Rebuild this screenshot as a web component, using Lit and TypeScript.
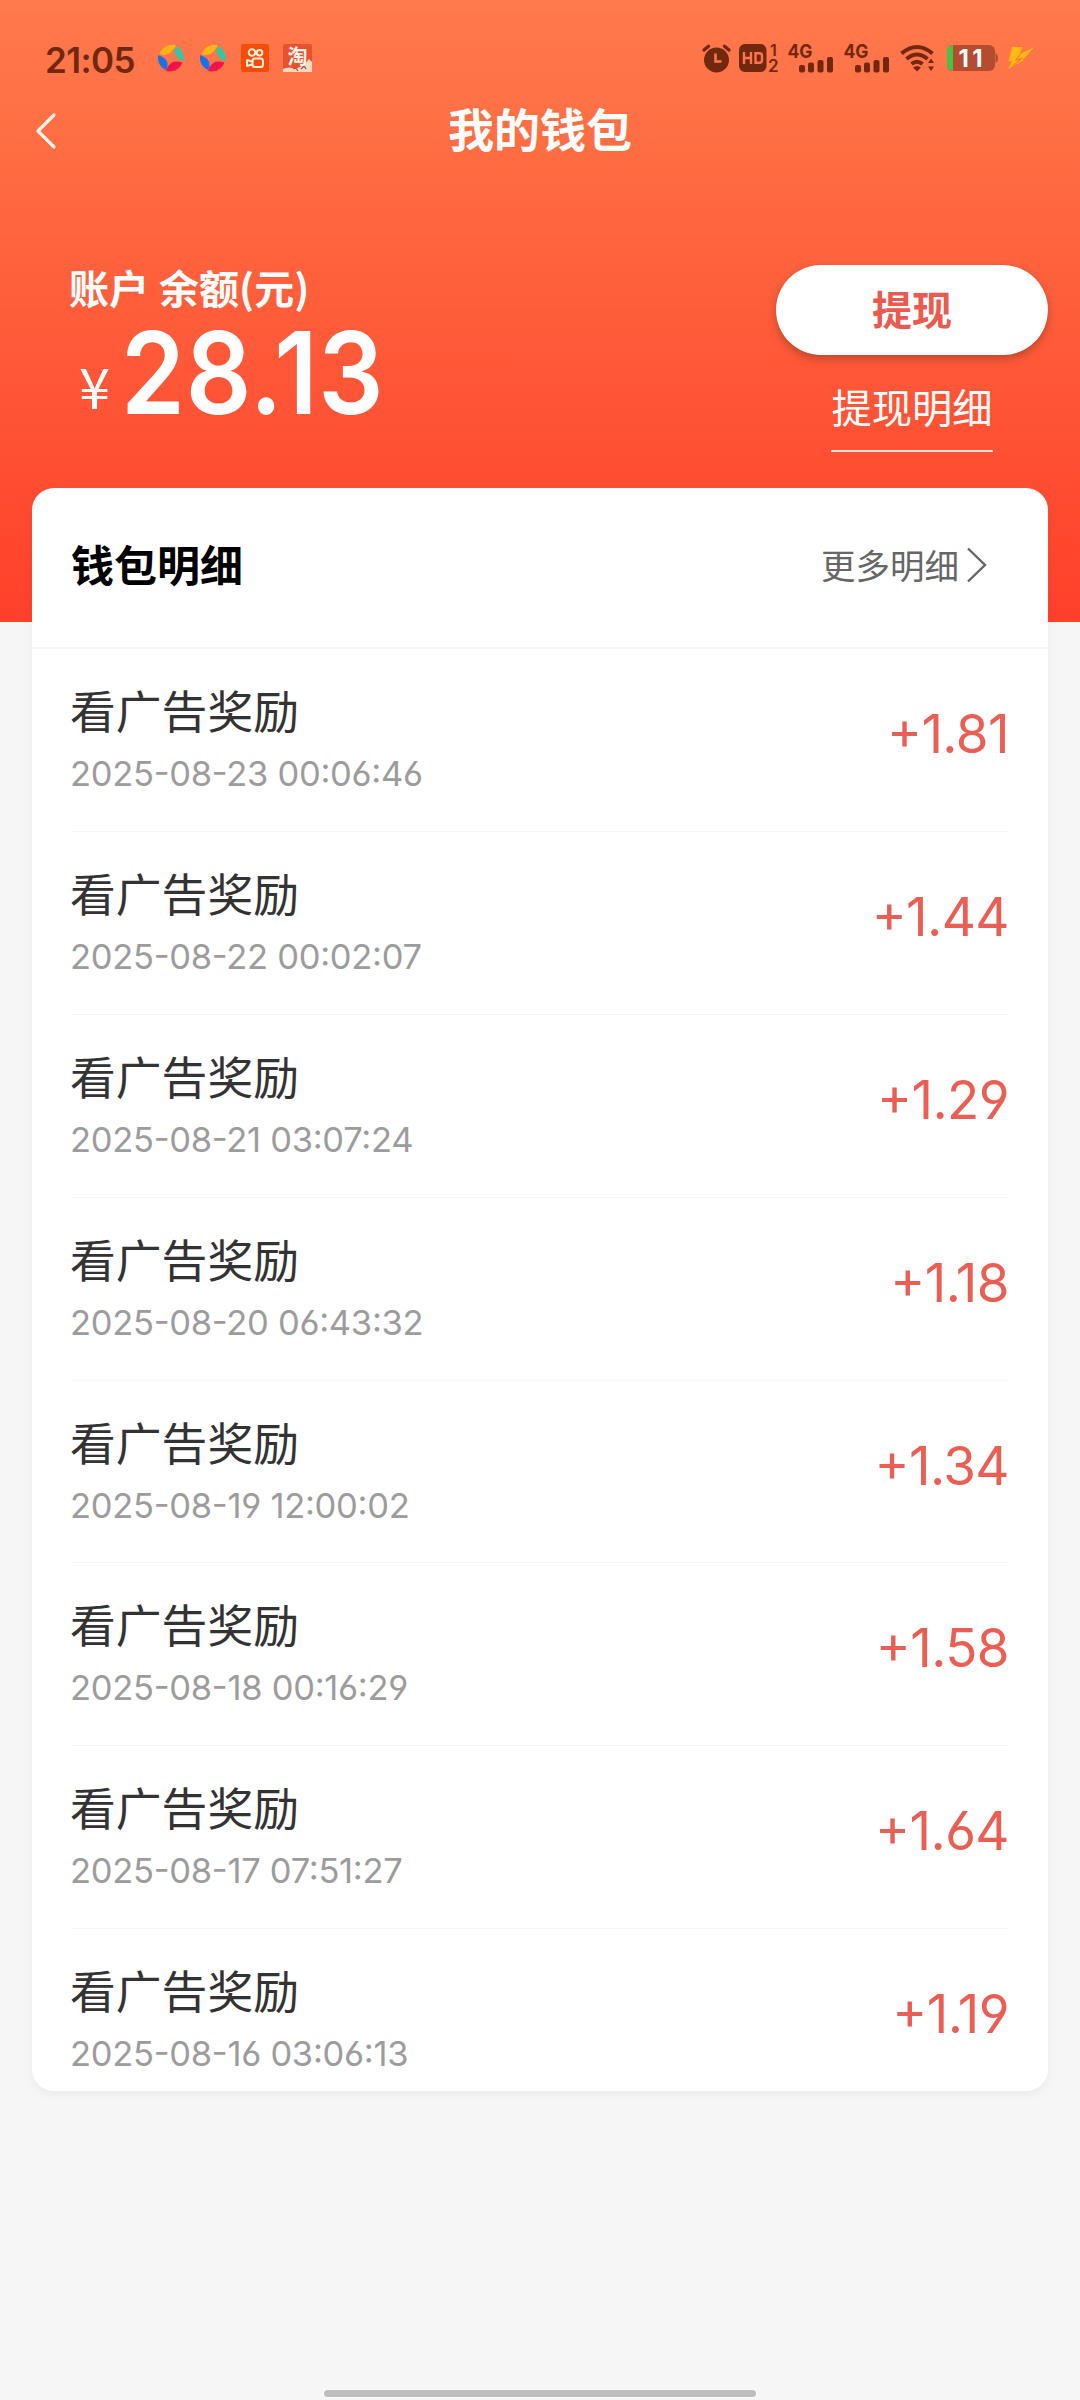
import { LitElement, html, css } from "lit";
import { customElement } from "lit/decorators.js";

interface Reward {
  title: string;
  time: string;
  amount: string;
}

const REWARDS: Reward[] = [
  { title: "看广告奖励", time: "2025-08-23 00:06:46", amount: "+1.81" },
  { title: "看广告奖励", time: "2025-08-22 00:02:07", amount: "+1.44" },
  { title: "看广告奖励", time: "2025-08-21 03:07:24", amount: "+1.29" },
  { title: "看广告奖励", time: "2025-08-20 06:43:32", amount: "+1.18" },
  { title: "看广告奖励", time: "2025-08-19 12:00:02", amount: "+1.34" },
  { title: "看广告奖励", time: "2025-08-18 00:16:29", amount: "+1.58" },
  { title: "看广告奖励", time: "2025-08-17 07:51:27", amount: "+1.64" },
  { title: "看广告奖励", time: "2025-08-16 03:06:13", amount: "+1.19" },
];

@customElement("status-bar")
class StatusBar extends LitElement {
  static styles = css`
    :host {
      display: flex;
      justify-content: space-between;
      align-items: flex-start;
      height: 76px;
      padding: 40px 44px 0 45px;
      box-sizing: border-box;
      color: #70280f;
      font-family: "Inter", "Noto Sans CJK SC", sans-serif;
    }
    .left,
    .right {
      display: flex;
      align-items: center;
      height: 36px;
    }
    .time {
      width: 112px;
      padding-top: 3px;
      font-size: 35px;
      line-height: 36px;
      font-weight: 600;
      letter-spacing: -0.6px;
      white-space: nowrap;
    }
    svg {
      display: block;
      flex: none;
      overflow: visible;
    }
    .swirl,
    .square {
      margin-right: 14px;
    }
    .alarm {
      margin-right: 8px;
    }
    .hd {
      margin-right: 10px;
    }
    .signal {
      margin-right: 11px;
    }
    .wifi {
      margin-right: 12px;
    }
    .battery {
      margin-right: 8px;
    }
  `;

  private swirl() {
    return html`<svg class="swirl" width="28" height="28" viewBox="0 0 28 28">
      <path d="M2.500 10C5 3 12 0 19 1c-2 4-5 8-9 9.500-2 .6-5 .6-7.500-.5z" fill="#fbb614" />
      <path d="M19 2C25 5 28 11 26.500 17.500 21.500 15.500 17.800 12 17.500 8c-.1-2 .3-4 1.500-6z" fill="#3cc3a0" />
      <path d="M25.500 18.500C22 26 16 28.500 9 27c1.500-5 5-9 9-9.500 2-.3 5 0 7.500 1z" fill="#f0144b" />
      <path d="M1.300 11C6 12.500 9.800 15.500 10.500 19.500c.2 2-.2 4.500-1.500 6.500C2.500 23 0 17 1.300 11z" fill="#1b72e8" />
    </svg>`;
  }

  private signal() {
    return html`<svg class="signal" width="45" height="30" viewBox="0 0 45 30">
      <text x="-0.500" y="15" font-size="19" font-weight="700" textLength="25" lengthAdjust="spacingAndGlyphs" fill="#70280f">4G</text>
      <g fill="#70280f">
        <rect x="11" y="22" width="6" height="7.500" rx="2" />
        <rect x="20" y="19.500" width="6" height="10" rx="2" />
        <rect x="29.500" y="17" width="6" height="12.500" rx="2" />
        <rect x="39" y="14" width="6" height="15.500" rx="2" />
      </g>
    </svg>`;
  }

  render() {
    return html`
      <div class="left">
        <span class="time">21:05</span>
        ${this.swirl()} ${this.swirl()}
        <svg class="square" width="28" height="28" viewBox="0 0 28 28">
          <rect width="28" height="28" rx="2.500" fill="#f84c06" />
          <g fill="none" stroke="#fff2df" stroke-width="2">
            <circle cx="11" cy="8.500" r="3.300" />
            <circle cx="18.500" cy="8.800" r="2.800" />
            <rect x="11.500" y="14.500" width="10.500" height="8.500" rx="2.500" />
            <path d="M11 17.500 6 16v6l5-1.500" stroke-linejoin="round" />
          </g>
        </svg>
        <svg width="29" height="28" viewBox="0 0 29 28">
          <rect width="29" height="28" rx="2" fill="#e8502f" />
          <path d="M0 25q6-3 12 0l9-4 5-6 3 3v10H0z" fill="#f9d9c4" />
          <path d="M10 25l3-1 2 3M18 25l3-3 2 3" stroke="#a2573c" stroke-width="1.300" fill="none" />
          <text x="4.500" y="19.500" font-size="20" font-weight="700" fill="#fff5e8">淘</text>
        </svg>
      </div>
      <div class="right">
        <svg class="alarm" width="29" height="28" viewBox="0 0 29 28">
          <circle cx="14.500" cy="16" r="12.500" fill="#70280f" />
          <path d="M2 6 6.500 2.200M27 6 22.500 2.200" stroke="#70280f" stroke-width="3.400" stroke-linecap="round" />
          <path d="M13.500 9.500v8h6" fill="none" stroke="#ff7549" stroke-width="2.600" />
        </svg>
        <svg class="hd" width="39" height="30" viewBox="0 0 39 30">
          <rect y="1" width="27.500" height="28" rx="6" fill="#70280f" />
          <path d="M5 9v12M12 9v12M5 15h7M16.500 10.200h4q2.500 0 2.500 2.500v4.600q0 2.500-2.500 2.500h-4z" fill="none" stroke="#ff7549" stroke-width="2.400" />
          <text x="31" y="12.500" font-size="16" font-weight="600" fill="#70280f">1</text>
          <text x="29" y="29" font-size="17" font-weight="600" fill="#70280f">2</text>
        </svg>
        ${this.signal()} ${this.signal()}
        <svg class="wifi" width="35" height="28" viewBox="0 0 35 28">
          <g fill="none" stroke="#70280f" stroke-width="4">
            <path d="M1.500 9.500Q17 -3.500 32.500 9.500" />
            <path d="M6.500 15Q17 6 27.500 15" />
            <path d="M11.500 20Q17 15.500 22.500 20" />
          </g>
          <path d="M13 23.500q4-3 8 0l-4 4z" fill="#70280f" />
          <path d="M31 14.500l3 4.500h-6zM31 27l3-4.500h-6z" fill="#70280f" />
        </svg>
        <svg class="battery" width="52" height="26" viewBox="0 0 52 26">
          <rect width="48" height="26" rx="6" fill="#b44c30" />
          <path d="M6 0H5.500Q0 1 0 6v14q0 5 6 6z" fill="#43c34a" />
          <path d="M48.500 8q2.500 1 2.500 5t-2.500 5z" fill="#b44c30" />
          <text x="11.500" y="22" font-size="24" font-weight="700" textLength="24" fill="#fff">11</text>
        </svg>
        <svg width="29" height="26" viewBox="0 0 29 26">
          <path d="M5 2h10.500l-2.500 7L27.500 2 17.500 13l-3 1.500 3 .5L1 24l4-8-3.500.5z" fill="#ffb912" />
          <path d="M14 8l-5 7 6-2-9 8" stroke="#f9842b" stroke-width="1.200" fill="none" />
        </svg>
      </div>
    `;
  }
}

@customElement("reward-row")
class RewardRow extends LitElement {
  static properties = { reward: { attribute: false } };
  declare reward: Reward;

  static styles = css`
    :host {
      display: flex;
      justify-content: space-between;
      box-sizing: border-box;
      height: 182.900px;
      margin: 0 40px;
      border-bottom: 1.500px solid #f5f5f5;
      font-family: "Inter", "Noto Sans CJK SC", sans-serif;
      font-feature-settings: "case", "cv03", "cv04";
    }
    .info {
      display: flex;
      flex-direction: column;
      padding-top: 30px;
      margin-left: -2px;
    }
    .title {
      font-family: "Noto Sans CJK SC", sans-serif;
      font-size: 45.800px;
      line-height: 60px;
      color: #333;
    }
    .time {
      margin-top: 15px;
      font-size: 34.500px;
      line-height: 40px;
      letter-spacing: -0.280px;
      color: #9c9c9c;
      white-space: nowrap;
    }
    .amount {
      padding-top: 55px;
      margin-right: -1px;
      font-size: 53px;
      line-height: 60px;
      letter-spacing: -0.600px;
      color: #eb5e54;
    }
  `;

  render() {
    return html`
      <div class="info">
        <span class="title">${this.reward.title}</span>
        <span class="time">${this.reward.time}</span>
      </div>
      <span class="amount">${this.reward.amount}</span>
    `;
  }
}

@customElement("app-root")
class AppRoot extends LitElement {
  static styles = css`
    :host {
      display: block;
      position: relative;
      width: 1080px;
      height: 2400px;
      overflow: hidden;
      font-family: "Noto Sans CJK SC", sans-serif;
      background: linear-gradient(#ff7a4d, #ff6c42 25%, #ff5034 72%, #ff402a) 0 0 / 100% 622px no-repeat #f6f6f6;
    }
    .nav {
      display: grid;
      grid-template-columns: 60px 1fr 60px;
      align-items: center;
      height: 110px;
      padding: 0 32px;
    }
    .nav svg {
      display: block;
    }
    .nav-title {
      text-align: center;
      color: #fff;
      font-size: 46px;
      line-height: 60px;
      font-weight: 700;
      padding-bottom: 8px;
    }
    .summary {
      display: flex;
      justify-content: space-between;
      height: 302px;
      padding: 79px 32px 0 69px;
      box-sizing: border-box;
      color: #fff;
    }
    .label {
      margin-top: -3px;
      font-size: 40px;
      line-height: 50px;
      font-weight: 700;
      word-spacing: 1px;
    }
    .balance {
      display: flex;
      align-items: flex-start;
      height: 120px;
      line-height: 120px;
      padding-left: 10px;
    }
    .yen {
      width: 42px;
      font-size: 56px;
      line-height: 146px;
    }
    .value {
      font-family: "Inter", sans-serif;
      font-size: 114px;
      line-height: 121px;
      font-weight: 600;
      letter-spacing: 0.800px;
      transform: scaleX(0.9);
      transform-origin: left;
    }
    .actions {
      display: flex;
      flex-direction: column;
      align-items: center;
      width: 272px;
    }
    .withdraw {
      width: 272px;
      height: 90px;
      border: 0;
      padding: 0 0 4px;
      margin-bottom: 16px;
      border-radius: 45px;
      background: #fff;
      box-shadow: 0 4px 9px rgba(70, 40, 20, 0.35);
      color: #eb5a50;
      font: 700 40px/86px "Noto Sans CJK SC", sans-serif;
    }
    .detail {
      font-size: 40.300px;
      line-height: 70px;
      height: 79px;
      border-bottom: 2px solid #ffe3da;
    }
    .shade {
      margin: 0 32px;
      border-radius: 22px;
      box-shadow: 0 4px 8px rgba(0, 0, 0, 0.05);
    }
    .card {
      height: 1603px;
      overflow: hidden;
      border-radius: 22px;
      background: #fff;
    }
    .card-head {
      display: flex;
      justify-content: space-between;
      align-items: center;
      box-sizing: border-box;
      height: 161px;
      padding: 0 61px 5px 39px;
      border-bottom: 2px solid #f5f5f5;
    }
    .card-title {
      font-size: 43px;
      font-weight: 700;
      color: #000;
      padding-bottom: 4px;
    }
    .more {
      display: flex;
      align-items: center;
      gap: 6px;
      font-size: 34.500px;
      color: #666;
    }
    .more span {
      padding-bottom: 2px;
    }
    .more svg {
      display: block;
    }
    .home {
      position: absolute;
      left: 324px;
      bottom: 3px;
      width: 432px;
      height: 7px;
      border-radius: 4px;
      background: #bebebe;
      box-shadow: 0 0 1px 1px #fdfdfd;
    }
  `;

  render() {
    return html`
      <status-bar></status-bar>
      <div class="nav">
        <svg width="28" height="38" viewBox="0 0 28 38">
          <path d="M22 3 6 19l16 16" fill="none" stroke="#fff4ea" stroke-width="3.200" stroke-linecap="round" stroke-linejoin="round" />
        </svg>
        <span class="nav-title">我的钱包</span>
      </div>
      <div class="summary">
        <div>
          <div class="label">账户 余额(元)</div>
          <div class="balance"><span class="yen">¥</span><span class="value">28.13</span></div>
        </div>
        <div class="actions">
          <button class="withdraw">提现</button>
          <span class="detail">提现明细</span>
        </div>
      </div>
      <div class="shade">
        <div class="card">
          <div class="card-head">
            <span class="card-title">钱包明细</span>
            <div class="more">
              <span>更多明细</span>
              <svg width="22" height="38" viewBox="0 0 22 38">
                <path d="M3 2.500 20 19 3 35.500" fill="none" stroke="#666" stroke-width="2.400" />
              </svg>
            </div>
          </div>
          ${REWARDS.map((r) => html`<reward-row .reward=${r}></reward-row>`)}
        </div>
      </div>
      <div class="home"></div>
    `;
  }
}
